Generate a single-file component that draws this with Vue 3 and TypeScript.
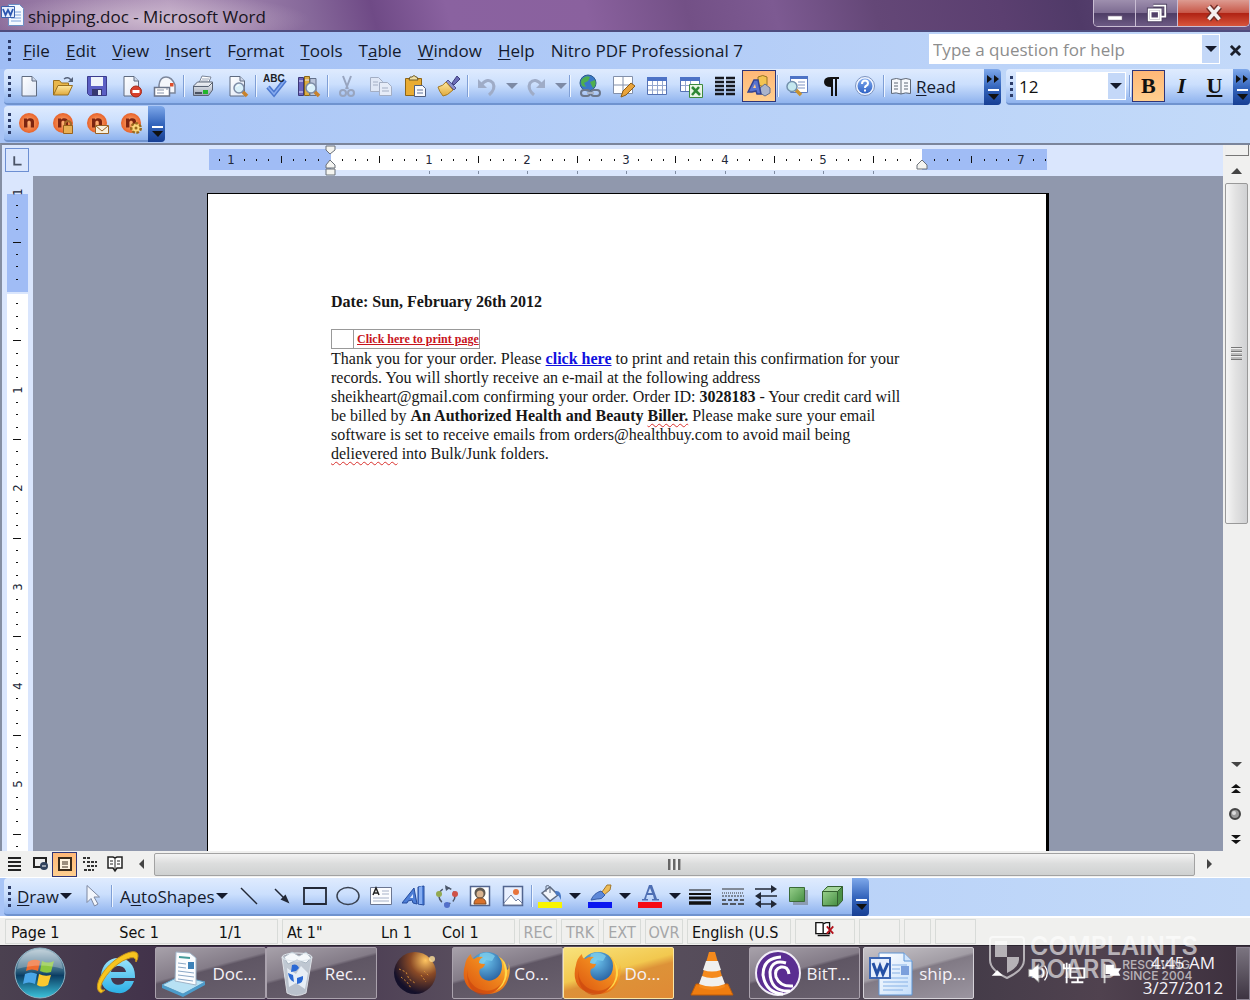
<script setup lang="ts">
import { ref } from 'vue'

interface ToolItem {
  kind: 'button' | 'separator' | 'arrow'
  icon?: string
  label?: string
  pressed?: boolean
  dim?: boolean
}

interface MenuEntry {
  before: string
  key: string
  after: string
}

interface TaskItem {
  icon: string
  text: string
  label: string
  state: 'pinned' | 'open' | 'alert' | 'active'
}

interface Tick {
  pos: number
  kind: 'dot' | 'half' | 'number'
  text: string
}

const btn = (icon: string, label: string, extra: Partial<ToolItem> = {}): ToolItem => ({
  kind: 'button',
  icon,
  label,
  ...extra,
})
const sep = (): ToolItem => ({ kind: 'separator' })
const drop = (label: string, dim = false): ToolItem => ({ kind: 'arrow', label, dim })

const page = '<path d="M5 2.500h10l4.500 4.500v15h-14.500z" fill="url(#g-paper)" stroke="#5f6b80"/><path d="M15 2.500v4.500h4.500" fill="#cfd8ea" stroke="#5f6b80"/>'
const lens = '<path d="M17 17l5 5" stroke="#c9822b" stroke-width="3.500"/><circle cx="14" cy="14" r="5" fill="#d9f0fa" stroke="#7d8ba5" stroke-width="1.500"/><path d="M11.500 13a3 3 0 0 1 3-2" stroke="#fff" fill="none"/>'
const nitro = '<circle cx="12" cy="12" r="10" fill="url(#g-nitro)"/><path d="M7 16.500v-9h3v1.300c2-2.300 7-2 7 1.700v6h-3.200v-5.300c0-2-3.400-2-3.400 0v5.300z" fill="#7c2410"/>'
const firefox = '<circle cx="25" cy="21" r="18" fill="url(#g-globe)"/><path d="M18 5q8-4 15 2l-3 5-6-1-3 5-5-2z" fill="#7fd0ee" opacity=".75"/><path d="M3 16Q4 9 9 5q0 4 3 5 4-3 9-2-4 2-4 6 2 1 6 1-1 4-5 5-2 5 2 9 6 5 13 1 7-4 7-13 0-6-4-10 8 4 9 14 3-2 1-8 3 6 1 14-4 17-20 18Q5 45 2 29 1 22 3 16z" fill="url(#g-fox)"/><path d="M5 20q0 14 12 20 13 5 22-5-7 12-20 11Q4 42 5 20z" fill="#c63f0c" opacity=".55"/><path d="M39 9q7 7 6 17-2 11-11 16 9-8 9-18 0-8-4-15z" fill="#ffd84a"/>'

const icons: Record<string, string> = {
  fresh: page,
  open: '<path d="M2.500 21V6.500h6l2 2.500h7v4" fill="#e9b74a" stroke="#9a701f"/><path d="M2.500 21l4.500-9.500h14.500L17 21z" fill="url(#g-folder)" stroke="#9a701f"/><path d="M13 5q4-3 7 1" fill="none" stroke="#56627a" stroke-width="1.500"/><path d="M22 3v5h-5z" fill="#56627a"/>',
  save: '<path d="M2.500 2.500h19v19h-17l-2-2z" fill="#5b5fc4" stroke="#3b3c8d"/><path d="M6 3h12v9H6z" fill="#eef3fb"/><path d="M7 15h10v6.500H7z" fill="#35386f"/><path d="M13 16h3v5h-3z" fill="#dfe5f4"/>',
  permission: page + '<circle cx="17" cy="17.500" r="5.500" fill="#d8402b" stroke="#a52a18"/><path d="M13.500 16h7v3h-7z" fill="#fff"/>',
  mail: '<path d="M6 11q1-8 7-8t9 8v8H6z" fill="#f4f6fb" stroke="#7c869b" stroke-width="1.500"/><path d="M17 9h3.500v3.500H17z" fill="#dd4e2b"/><path d="M1.500 13.500h15V22h-15z" fill="#fff" stroke="#6c768b" stroke-width="1.500"/><path d="M4 16h7M4 19h7M13 15h2" stroke="#8793ab"/>',
  print: '<path d="M8 9l3-7 9 1-3 7z" fill="#fff" stroke="#7a8598"/><path d="M10 7h7M11 5h7" stroke="#9aa5b8"/><path d="M2.500 12l4-4h15v8l-4 5.500h-15z" fill="url(#g-silver)" stroke="#596273"/><path d="M3 12.500h14.500l4-4" fill="none" stroke="#596273"/><path d="M12 16h5v4h-5z" fill="#21b52b"/><path d="M4 19h7" stroke="#4b5362" stroke-width="2"/>',
  preview: page + lens,
  spell: '<path d="M5 13l6 7L22 6" fill="none" stroke="#4c78cf" stroke-width="4.500"/><path d="M5 13l6 7L22 6" fill="none" stroke="#86abef" stroke-width="1.500"/><text x="0" y="8" font-family="Liberation Sans, sans-serif" font-size="10" font-weight="700" fill="#1c1f28">ABC</text>',
  research: '<path d="M1.500 3.500h5v18h-5z" fill="#6a64bc" stroke="#3c3878"/><path d="M7.500 2.500h5v19h-5z" fill="#dcae43" stroke="#8a6618"/><path d="M13 4.500h6v17h-6z" fill="#b9c4da" stroke="#63708a"/><path d="M2 7h4M2 18h4M8 6h4" stroke="#e9e4ff"/>' + lens,
  cut: '<path d="M8 2l5 13M16 2l-5 13" stroke="#98a5bf" stroke-width="2"/><circle cx="8" cy="19" r="3" fill="none" stroke="#98a5bf" stroke-width="2"/><circle cx="16" cy="19" r="3" fill="none" stroke="#98a5bf" stroke-width="2"/>',
  copy: '<path d="M1.500 3.500h8l4 4v10h-12z" fill="#dfe7f6" stroke="#a3aec4"/><path d="M10.500 8.500h8l4 4v9h-12z" fill="#e6ecf8" stroke="#a3aec4"/><path d="M4 8h5M4 11h5M13 14h6M13 17h7" stroke="#a3aec4"/>',
  paste: '<path d="M2.500 4.500h16v17h-16z" fill="#e9ac34" stroke="#8d6517"/><path d="M6 6l1-3h2q2-3 4 0h1l1 3z" fill="#f0dfa3" stroke="#6d5a2a"/><path d="M11.500 11.500h8l3 3v8h-11z" fill="#f7f9fe" stroke="#4f5f80"/><path d="M14 16h6M14 19h6" stroke="#64779e"/>',
  brush: '<path d="M15 9l5-7 3 3-6 6z" fill="#6a6bb6" stroke="#3f4080"/><path d="M11 6l8 8-2 2-8-8z" fill="#8c8fc9" stroke="#51549a"/><path d="M9 8l7 8q-6 6-10 6-4-5-5-9 5-1 8-5z" fill="url(#g-folder)" stroke="#a67a23"/>',
  undo: '<path d="M6 11q7-8 12-2 3 6-4 12" fill="none" stroke="#9facc7" stroke-width="3"/><path d="M3 5v9h9z" fill="#9facc7"/>',
  redo: '<path d="M18 11q-7-8-12-2-3 6 4 12" fill="none" stroke="#9facc7" stroke-width="3"/><path d="M21 5v9h-9z" fill="#9facc7"/>',
  link: '<circle cx="11" cy="9" r="8" fill="#3a78c7" stroke="#2c5a8c"/><path d="M5 5q4-4 8-2l-2 4-4 2 2 4-4-1q-2-4 0-7zM13 8l5-2q2 5-2 8z" fill="#4faf4e"/><rect x="4" y="16" width="9" height="6" rx="3" fill="none" stroke="#6c778b" stroke-width="2"/><rect x="14" y="16" width="9" height="6" rx="3" fill="none" stroke="#6c778b" stroke-width="2"/><path d="M10 19h7" stroke="#a8b2c4" stroke-width="2"/>',
  borders: '<path d="M2.500 2.500h19v17h-19z" fill="#fff" stroke="#8290ab"/><path d="M12 2.500v17M2.500 11h19" stroke="#8290ab"/><path d="M10 23l2-6 8-8 4 3-9 9z" fill="#e9a43c" stroke="#8d5d16"/>',
  table: '<path d="M2.500 3.500h19v17h-19z" fill="#fff" stroke="#5572b3"/><path d="M2 3h20v4H2z" fill="#4d73c6"/><path d="M7.500 7v13M12.500 7v13M17.500 7v13M3 11.500h18M3 16h18" stroke="#93a6cd"/>',
  excel: '<path d="M1.500 3.500h19v14h-19z" fill="#fff" stroke="#5572b3"/><path d="M1 3h20v4H1z" fill="#4d73c6"/><path d="M6.500 7v10M11.500 7v10M2 11.500h18" stroke="#93a6cd"/><path d="M10.500 10.500h13v13h-13z" fill="#e9f5e4" stroke="#3e8a3d"/><path d="M13 13l8 8M20 13l-7 8" stroke="#2e8735" stroke-width="2.500"/>',
  columns: '<path d="M2 4h9M2 8h9M2 12h9M2 16h9M2 20h9M13 4h9M13 8h9M13 12h9M13 16h9M13 20h9" stroke="#15181f" stroke-width="2.500"/>',
  drawing: '<path d="M11 3q5-3 9 0v8q-4 3-9 0z" fill="#f3c451" stroke="#9a7424"/><path d="M13 14l5-4 5 4v5l-5 3-5-3z" fill="#aab4cc" stroke="#636e8c"/><path d="M1 18L7 6h4l3 14h-4l-1-3-4 1z" fill="#5973cf" stroke="#34438f" stroke-width="1.500"/><path d="M6 14h3l-1-4z" fill="#ffc98a"/>',
  docmap: '<path d="M5.500 2.500h17v16h-17z" fill="#fff" stroke="#5d7cc0"/><path d="M5 2h18v3H5z" fill="#4d73c6"/><path d="M13 8h7M13 11h7M13 14h7" stroke="#7f94c4"/><path d="M10 15l6 6" stroke="#c9922f" stroke-width="3.500"/><circle cx="7" cy="12.500" r="5" fill="#c4e8ef" stroke="#7391ac" stroke-width="1.500"/>',
  pilcrow: '<path d="M20 3v2h-2v17h-2V5h-2v17h-2V13q-7 0-7-5t7-5z" fill="#111"/>',
  help: '<circle cx="12" cy="12" r="9.500" fill="#eef4ff" stroke="#7c93bf"/><circle cx="12" cy="12" r="7.500" fill="url(#g-help)"/><path d="M9 10q0-3.500 3-3.500t3 3q0 1.500-2 2.500-1 .5-1 2" fill="none" stroke="#fff" stroke-width="2"/><path d="M11 15.500h2v2h-2z" fill="#fff"/>',
  read: '<path d="M2.500 5.500q5-2 9.500 0 5-2 9.500 0v14q-5-1.500-9.500.5-5-2-9.500-.5z" fill="#f6f8fc" stroke="#5e6877"/><path d="M12 5v15M5 9h4M5 12h4M5 15h4M15 9h4M15 12h4M15 15h4" stroke="#5e6877"/>',
  nitro,
  nitroLock: nitro + '<path d="M14 15v-3q3-4 6 0v3" fill="none" stroke="#a3692a" stroke-width="2"/><path d="M12.500 14.500h9v8h-9z" fill="#e8af55" stroke="#9a631d"/>',
  nitroMail: nitro + '<path d="M10.500 14.500h13v8h-13z" fill="#f8f0dd" stroke="#9a6426"/><path d="M11 15l6 5 6-5" fill="none" stroke="#9a6426"/>',
  nitroGear: nitro + '<circle cx="17" cy="17" r="4.500" fill="#fbd77c" stroke="#9a6a1d" stroke-width="3" stroke-dasharray="2.500 1.500"/><circle cx="17" cy="17" r="3.500" fill="#fbd77c"/><circle cx="17" cy="17" r="1.500" fill="#9a6a1d"/>',
  pointer: '<path d="M6 1.500v17l4-4 3.500 7.500 3.500-2-4-7h5.500z" fill="#f3f6fc" stroke="#7c87a0"/>',
  line: '<path d="M4 4l16 16" stroke="#222836" stroke-width="1.500"/>',
  arrow: '<path d="M5 5l10 10" stroke="#222836" stroke-width="1.500"/><path d="M19.500 19.500l-9-4 5-5z" fill="#222836"/>',
  rect: '<path d="M1 4h22v16H1z" fill="none" stroke="#222836" stroke-width="1.800"/>',
  oval: '<ellipse cx="12" cy="12" rx="11" ry="8.500" fill="none" stroke="#39414f" stroke-width="1.500"/>',
  textbox: '<path d="M1.500 3.500h21v17h-21z" fill="#fbfcff" stroke="#6b7691"/><path d="M13 7h7M13 10h7M4 14h16M4 17h16" stroke="#a6b1c8"/><path d="M4 11l3-7 3 7M5 9h4" fill="none" stroke="#222" stroke-width="1.500"/>',
  wordart: '<path d="M0 19L12 4l3 16-4-1-1-3-4 1-1 2z" fill="#4d7ed6" stroke="#244b9d"/><path d="M16 3l6-1v19l-6-1z" fill="#4d7ed6" stroke="#244b9d"/><path d="M17 3l3-1v18h-3z" fill="#86aef2"/><path d="M8 14l3-4v4z" fill="#dbe8ff"/>',
  diagram: '<circle cx="12" cy="12" r="8" fill="none" stroke="#4b5669" stroke-width="1.500" stroke-dasharray="6 3"/><circle cx="4" cy="10" r="3" fill="#93a951"/><circle cx="20" cy="10" r="3" fill="#cf5248"/><circle cx="12" cy="21" r="3" fill="#526fc9"/><path d="M10 1l5 3-4 3z" fill="#4b5669"/>',
  clipart: '<path d="M2.500 2.500h19v19h-19z" fill="#fff" stroke="#52658f" stroke-width="1.500"/><circle cx="12" cy="9" r="5.500" fill="#605850"/><circle cx="12" cy="10" r="3.500" fill="#d9b491"/><path d="M6 20q0-6 6-6t6 6z" fill="#d9722c" stroke="#7d4a24"/>',
  picture: '<path d="M2.500 2.500h19v19h-19z" fill="#e9f0ff" stroke="#52658f" stroke-width="1.500"/><circle cx="15" cy="8" r="3" fill="#e7743d"/><path d="M3 19l7-8 5 6 2-2 4 4v2H3z" fill="#fff" stroke="#6f7ea0"/>',
  fill: '<path d="M4 9l8-6 8 8-8 6z" fill="#f2f5fa" stroke="#5e6a80" stroke-width="1.500"/><path d="M8 8V2q3-2 4 2v5" fill="none" stroke="#5e6a80"/><path d="M17 7q7-1 6 9-3-6-5-5z" fill="#4c7bc6"/><path d="M0 18h24v6H0z" fill="#f8f400"/>',
  stroke: '<path d="M14 8l5-7h4l-1 5-6 5z" fill="#edbc58" stroke="#a2782c"/><path d="M3 16q3-7 10-9l4 4q-3 5-8 4z" fill="#5d88d8" stroke="#375da8"/><path d="M0 18h24v6H0z" fill="#0a17f0"/>',
  fontcolor: '<path d="M4 16.500v-1.500h2L11 1h3l5 14h2v1.500h-7V15h2l-1-4H9l-1 4h2v1.500zM10 9h4l-2-5z" fill="#4e6fb4" fill-rule="evenodd"/><path d="M0 18h24v6H0z" fill="#f50a14"/>',
  weight: '<path d="M1 6h22" stroke="#111"/><path d="M1 10h22" stroke="#111" stroke-width="2"/><path d="M1 14h22" stroke="#111" stroke-width="3"/><path d="M1 19h22" stroke="#111" stroke-width="3.500"/>',
  dash: '<path d="M1 5h22" stroke="#333"/><path d="M1 9h22" stroke="#333" stroke-dasharray="1 1"/><path d="M1 12h22" stroke="#333" stroke-dasharray="2 1"/><path d="M1 16h22" stroke="#333" stroke-width="1.500" stroke-dasharray="4 2"/><path d="M1 20h22" stroke="#333" stroke-width="1.500" stroke-dasharray="6 2"/>',
  arrows: '<path d="M1 5h18M5 12h18M5 20h14" stroke="#222836" stroke-width="1.500"/><path d="M17 1l6 4-6 4zM7 8l-6 4 6 4zM7 16l-6 4 6 4zM17 16l6 4-6 4z" fill="#222836"/>',
  shadow: '<path d="M6 6h15v15H6z" fill="#7c8797" opacity=".7"/><path d="M2.500 3.500h15v14h-15z" fill="url(#g-green)" stroke="#3a6b37"/>',
  cube: '<path d="M2.500 7.500l5-5h15v14l-5 5.500h-15z" fill="#4c9148" stroke="#33602f"/><path d="M2.500 7.500h15v14h-15z" fill="url(#g-green)" stroke="#33602f"/><path d="M3 7l5-4h14l-4 4z" fill="#a4d59a"/><path d="M17.500 7.500l5-5" stroke="#33602f"/>',
  vNormal: '<path d="M5 6h13M5 10h13M5 14h13M5 18h13" stroke="#222" stroke-width="2"/>',
  vWeb: '<path d="M6 6h12v9H6z" fill="#eee" stroke="#222" stroke-width="2"/><circle cx="16" cy="14" r="4" fill="#31435e"/><path d="M14 14h4" stroke="#fff"/>',
  vPrint: '<path d="M6 6h12v12H6z" fill="#fff3df" stroke="#3a2a1a" stroke-width="2"/><path d="M9 10h6M9 12h6M9 15h6" stroke="#3a2a1a"/>',
  vOutline: '<path d="M5 6h8M9 10h10M9 14h10M6 18h10M5 10h2" stroke="#333" stroke-width="2" stroke-dasharray="3 1"/>',
  vRead: '<path d="M5 5h5l2 1 2-1h5v11h-5l-2 3-2-3H5z" fill="#fff" stroke="#222" stroke-width="1.500"/><path d="M12 6v12M7 9h3M14 9h3M7 12h3M14 12h3" stroke="#222"/>',
  proof: '<path d="M2 4h7l2 1 2-1h4v12H2z" fill="#fff" stroke="#111" stroke-width="1.500"/><path d="M10 5v11M4 18h13" stroke="#111" stroke-width="1.500"/><path d="M14 8l7 8M21 8l-7 8" stroke="#b3121b" stroke-width="2"/>',
  word: '<path d="M8.500 1.500h11l4 4v17h-15z" fill="#f5f9ff" stroke="#6c8fc4"/><path d="M13 9h8M13 12h8M11 15h10M11 18h10" stroke="#7ea3dc"/><path d="M1.500 3.500h13v11h-13z" fill="#e4edfc" stroke="#3d62ad"/><path d="M3 6l2.500 6L8 7l2.500 5L13 6" fill="none" stroke="#2b56b0" stroke-width="1.800"/>',
  caret: '<path d="M0 3h12L6 9z" fill="currentColor"/>',
}

const bigIcons: Record<string, string> = {
  ie: '<path d="M24 9c10 0 17 7 17 18v2H17c1 8 11 9 14 3h9c-3 9-10 13-17 12C11 43 6 36 7 26 8 16 15 9 24 9zm-7 14h15c-1-8-14-8-15 0z" fill="url(#g-ie)" fill-rule="evenodd"/><path d="M7 44C-2 40 7 22 20 12 31 3 44-1 44 7q0 3-2 6 0-7-9-3C21 14 8 30 7 37q-1 5 4 4z" fill="#f7c51f" stroke="#c8941a"/>',
  documents: '<path d="M2 36l18-9 25 6-22 12z" fill="#b8e1f4" stroke="#5b9dc4"/><path d="M2 36v3l21 9v-3zM45 33v3L23 48v-3z" fill="#4c9ccb"/><path d="M16 3l14 1 6 5v27l-21-4z" fill="#fbfdff" stroke="#9fb4c8"/><path d="M19 8l11 1" stroke="#459c9a" stroke-width="2"/><path d="M18 14l8 1M18 18l8 1M18 22l16 2M18 26l16 2M18 30l15 2" stroke="#89a7c6"/><path d="M28 13h6v7h-6z" fill="#3d82b8"/>',
  recycle: '<path d="M9 8l5 36q9 5 19 0l6-36z" fill="#c9d4de" opacity=".85" stroke="#eef3f7"/><path d="M11 8l8-5 7 4 7-4 5 6-5 5-9-3-9 4z" fill="#f5f8fb" stroke="#a9b6c2"/><path d="M14 19l9 6 5-8 7 7-3 16-9-6-7 4z" fill="#e7eef5"/><path d="M19 16q5-2 7 3l-3 3-5 1zM15 24l5 2 1 7q-5-2-6-9zM24 29l6-2q1 7-6 8z" fill="#2a69d4"/><ellipse cx="24" cy="8" rx="15" ry="4" fill="none" stroke="#dfe7ee"/>',
  eclipse: '<circle cx="24" cy="24" r="21" fill="url(#g-eclipse)"/><path d="M8 20l7 3 3 7 6 4M10 28l6 5 4 6M30 26l5 7M33 22l5 5" stroke="#d18a35" stroke-dasharray="2 2" fill="none"/><circle cx="41" cy="10" r="3" fill="#ffe19a" opacity=".8"/>',
  firefox,
  vlc: '<path d="M8 35h32l5 11H3z" fill="#ef7d10" stroke="#c05d08"/><path d="M21 3h6l10 35q-13 6-26 0z" fill="#f58a1c"/><path d="M18 12h12l3 9q-9 3-18 0zM14 27q10 4 20 0l3 8q-13 5-26 0z" fill="#f0f0ee"/>',
  bittorrent: '<circle cx="24" cy="24" r="22" fill="#5a2d91" stroke="#f2edf8" stroke-width="2"/><g fill="none" stroke="#fff" stroke-width="3"><path d="M35 25q-1-8-8-7-7 2-5 10 4 10 17 9"/><path d="M32 14q-14-4-16 9 0 20 20 19"/><path d="M27 8Q9 9 9 26q3 18 20 19"/></g>',
  wordBig: '<path d="M12 4h25l8 8v34H12z" fill="url(#g-sheet)" stroke="#5f95d4"/><path d="M37 4v8h8" fill="#cfe3fb" stroke="#5f95d4"/><path d="M25 16h15M25 20h8M25 24h8M16 29h25M16 33h25M16 37h25M16 41h20" stroke="#86b1e6"/><path d="M34 17h8v9h-8z" fill="#7b9fdc"/><path d="M3 9h20v20H3z" fill="#e6effc" stroke="#3c66b3" stroke-width="2"/><path d="M6 14l4 11 3-8 3 8 5-11" fill="none" stroke="#2450a5" stroke-width="3"/>',
}

const menus: MenuEntry[] = [
  { before: '', key: 'F', after: 'ile' },
  { before: '', key: 'E', after: 'dit' },
  { before: '', key: 'V', after: 'iew' },
  { before: '', key: 'I', after: 'nsert' },
  { before: 'F', key: 'o', after: 'rmat' },
  { before: '', key: 'T', after: 'ools' },
  { before: 'T', key: 'a', after: 'ble' },
  { before: '', key: 'W', after: 'indow' },
  { before: '', key: 'H', after: 'elp' },
  { before: 'Nitro PDF Professional 7', key: '', after: '' },
]

const standard: ToolItem[] = [
  btn('fresh', 'New'), btn('open', 'Open'), btn('save', 'Save'), btn('permission', 'Permission'), btn('mail', 'E-mail'),
  sep(), btn('print', 'Print'), btn('preview', 'Print Preview'),
  sep(), btn('spell', 'Spelling'), btn('research', 'Research'),
  sep(), btn('cut', 'Cut'), btn('copy', 'Copy'), btn('paste', 'Paste'), btn('brush', 'Format Painter'),
  sep(), btn('undo', 'Undo'), drop('Undo list', true), btn('redo', 'Redo'), drop('Redo list', true),
  sep(), btn('link', 'Hyperlink'), btn('borders', 'Tables and Borders'), btn('table', 'Insert Table'),
  btn('excel', 'Insert Worksheet'), btn('columns', 'Columns'), btn('drawing', 'Drawing', { pressed: true }),
  sep(), btn('docmap', 'Document Map'), btn('pilcrow', 'Show marks'), btn('help', 'Help'), sep(),
]

const nitroTools: ToolItem[] = [
  btn('nitro', 'Create PDF'), btn('nitroLock', 'Create secure PDF'), btn('nitroMail', 'E-mail PDF'), btn('nitroGear', 'PDF settings'),
]

const drawTools: ToolItem[] = [
  btn('line', 'Line'), btn('arrow', 'Arrow'), btn('rect', 'Rectangle'), btn('oval', 'Oval'), btn('textbox', 'Text Box'),
  btn('wordart', 'WordArt'), btn('diagram', 'Diagram'), btn('clipart', 'Clip Art'), btn('picture', 'Picture'), sep(),
  btn('fill', 'Fill Color'), drop('Fill colors'), btn('stroke', 'Line Color'), drop('Line colors'),
  btn('fontcolor', 'Font Color'), drop('Font colors'), btn('weight', 'Line Style'), btn('dash', 'Dash Style'),
  btn('arrows', 'Arrow Style'), btn('shadow', 'Shadow'), btn('cube', '3-D Style'),
]

const views: ToolItem[] = [
  btn('vNormal', 'Normal View'), btn('vWeb', 'Web Layout'), btn('vPrint', 'Print Layout', { pressed: true }),
  btn('vOutline', 'Outline'), btn('vRead', 'Reading Layout'),
]

const tasks: TaskItem[] = [
  { icon: 'ie', text: '', label: 'Internet Explorer', state: 'pinned' },
  { icon: 'documents', text: 'Doc...', label: 'Documents', state: 'open' },
  { icon: 'recycle', text: 'Rec...', label: 'Recycle Bin', state: 'open' },
  { icon: 'eclipse', text: '', label: 'Eclipse', state: 'pinned' },
  { icon: 'firefox', text: 'Co...', label: 'Firefox', state: 'open' },
  { icon: 'firefox', text: 'Do...', label: 'Downloads', state: 'alert' },
  { icon: 'vlc', text: '', label: 'VLC', state: 'pinned' },
  { icon: 'bittorrent', text: 'BitT...', label: 'BitTorrent', state: 'open' },
  { icon: 'wordBig', text: 'ship...', label: 'shipping.doc', state: 'active' },
]

// Ruler marks fall on every eighth of an inch, with 592px standing for six inches.
function ticks(origin: number, from: number, to: number): Tick[] {
  const list: Tick[] = []
  for (let i = from; i <= to; i++) {
    const kind = i % 8 === 0 ? 'number' : i % 4 === 0 ? 'half' : 'dot'
    list.push({ pos: Math.round(origin + (i * 592) / 48), kind, text: String(Math.abs(i / 8)) })
  }
  return list
}

const across = ticks(122, -10, 58).filter((t) => t.text !== '0' && t.text !== '6')
const down = ticks(115, -8, 45).filter((t) => t.text !== '0')
const stops = [2, 3, 4, 5, 6, 7, 8, 9, 10, 11].map((i) => Math.round(122 + (i * 592) / 12))

const question = ref('')
const fontSize = ref('12')
</script>

<template>
  <div class="screen">
    <svg class="defs" aria-hidden="true">
      <defs>
        <linearGradient id="g-paper" x1="0" y1="0" x2="1" y2="1"><stop offset="0" stop-color="#fff" /><stop offset="1" stop-color="#dce5f5" /></linearGradient>
        <linearGradient id="g-folder" x1="0" y1="0" x2="0" y2="1"><stop offset="0" stop-color="#ffe9a0" /><stop offset="1" stop-color="#e0a93c" /></linearGradient>
        <linearGradient id="g-silver" x1="0" y1="0" x2="0" y2="1"><stop offset="0" stop-color="#f5f7fa" /><stop offset="1" stop-color="#98a2b3" /></linearGradient>
        <linearGradient id="g-green" x1="0" y1="0" x2="1" y2="1"><stop offset="0" stop-color="#97cf8b" /><stop offset="1" stop-color="#468f43" /></linearGradient>
        <linearGradient id="g-help" x1="0" y1="0" x2="0" y2="1"><stop offset="0" stop-color="#7fa9ee" /><stop offset="1" stop-color="#2f62c4" /></linearGradient>
        <radialGradient id="g-nitro"><stop offset="0" stop-color="#ffb176" /><stop offset="1" stop-color="#e8622a" /></radialGradient>
        <linearGradient id="g-ie" x1="0" y1="0" x2="0" y2="1"><stop offset="0" stop-color="#9be4fb" /><stop offset="1" stop-color="#2bb0e6" /></linearGradient>
        <radialGradient id="g-globe" cx=".45" cy=".25" r=".8"><stop offset="0" stop-color="#6cc4ee" /><stop offset="1" stop-color="#123f86" /></radialGradient>
        <linearGradient id="g-fox" x1="0" y1="1" x2="1" y2="0"><stop offset="0" stop-color="#d94e0e" /><stop offset="0.600" stop-color="#f18a1e" /><stop offset="1" stop-color="#ffd94d" /></linearGradient>
        <radialGradient id="g-eclipse" cx=".75" cy=".2" r=".8"><stop offset="0" stop-color="#ffc561" /><stop offset="0.450" stop-color="#8a4a26" /><stop offset="1" stop-color="#14102a" /></radialGradient>
        <linearGradient id="g-sheet" x1="0" y1="0" x2="1" y2="1"><stop offset="0" stop-color="#fff" /><stop offset="1" stop-color="#c5defa" /></linearGradient>
        <linearGradient id="g-orb" x1="0" y1="0" x2="0" y2="1"><stop offset="0" stop-color="#b6c9d4" /><stop offset="0.450" stop-color="#2f617f" /><stop offset="0.550" stop-color="#0b3d63" /><stop offset="1" stop-color="#3cc4dc" /></linearGradient>
      </defs>
    </svg>

    <header class="title-bar">
      <svg class="title-icon" viewBox="0 0 24 24" v-html="icons.word"></svg>
      <h1>shipping.doc - Microsoft Word</h1>
      <div class="window-buttons">
        <button type="button" aria-label="Minimize"><svg viewBox="0 0 24 24"><path d="M4 15h16v5H4z" fill="#fff" stroke="#564568" /></svg></button>
        <button type="button" aria-label="Restore"><svg viewBox="0 0 24 24"><path d="M8 4h13v12h-4M3 8h13v12H3z" fill="none" stroke="#4d4060" stroke-width="4" /><path d="M8 4h13v12h-4M3 8h13v12H3z" fill="none" stroke="#fff" stroke-width="2" /><path d="M5 10h9v8H5z" fill="none" stroke="#fff" stroke-width="2" /></svg></button>
        <button type="button" class="close" aria-label="Close window"><svg viewBox="0 0 24 24"><path d="M6 5l12 14M18 5L6 19" stroke="#743029" stroke-width="7" /><path d="M6 5l12 14M18 5L6 19" stroke="#f4f0f0" stroke-width="4" /></svg></button>
      </div>
    </header>

    <nav class="menu-bar">
      <span class="grip"></span>
      <button v-for="m in menus" :key="m.before + m.key" type="button" class="menu">{{ m.before }}<u v-if="m.key">{{ m.key }}</u>{{ m.after }}</button>
      <div class="question">
        <input v-model="question" type="text" placeholder="Type a question for help" aria-label="Type a question for help" />
        <button type="button" aria-label="Recent questions"><svg class="caret" viewBox="0 0 12 12" v-html="icons.caret"></svg></button>
      </div>
      <button type="button" class="doc-close" aria-label="Close document"><svg viewBox="0 0 12 12"><path d="M1 1l10 10M11 1L1 11" stroke="#1b1f2b" stroke-width="3" /></svg></button>
    </nav>

    <div class="tool-row">
      <div class="toolbar">
        <span class="grip"></span>
        <template v-for="(t, i) in standard" :key="i">
          <span v-if="t.kind === 'separator'" class="sep"></span>
          <button v-else-if="t.kind === 'arrow'" type="button" class="drop" :class="{ dim: t.dim }" :aria-label="t.label"><svg class="caret" viewBox="0 0 12 12" v-html="icons.caret"></svg></button>
          <button v-else type="button" class="tool" :class="{ pressed: t.pressed }" :aria-label="t.label"><svg viewBox="0 0 24 24" v-html="icons[t.icon!]"></svg></button>
        </template>
        <button type="button" class="read"><svg viewBox="0 0 24 24" v-html="icons.read"></svg><span><u>R</u>ead</span></button>
        <button type="button" class="more" aria-label="More standard buttons"><svg viewBox="0 0 17 36"><path d="M3 6l5 4-5 4zM10 6l5 4-5 4z" fill="#111" /><path d="M4 21h11" stroke="#fff" stroke-width="2" /><path d="M4 25h11l-5 6z" fill="#111" /></svg></button>
      </div>
      <div class="toolbar formatting">
        <span class="grip"></span>
        <div class="combo">
          <select v-model="fontSize" aria-label="Font size"><option>12</option><option>14</option></select>
          <span class="combo-arrow"><svg class="caret" viewBox="0 0 12 12" v-html="icons.caret"></svg></span>
        </div>
        <span class="sep"></span>
        <button type="button" class="tool glyph pressed"><b>B</b></button>
        <button type="button" class="tool glyph"><i>I</i></button>
        <button type="button" class="tool glyph"><u>U</u></button>
        <button type="button" class="more" aria-label="More formatting buttons"><svg viewBox="0 0 17 36"><path d="M3 6l5 4-5 4zM10 6l5 4-5 4z" fill="#111" /><path d="M4 21h11" stroke="#fff" stroke-width="2" /><path d="M4 25h11l-5 6z" fill="#111" /></svg></button>
      </div>
    </div>

    <div class="tool-row">
      <div class="toolbar">
        <span class="grip"></span>
        <button v-for="t in nitroTools" :key="t.icon" type="button" class="tool" :aria-label="t.label"><svg viewBox="0 0 24 24" v-html="icons[t.icon!]"></svg></button>
        <button type="button" class="more" aria-label="More PDF buttons"><svg viewBox="0 0 17 36"><path d="M4 21h11" stroke="#fff" stroke-width="2" /><path d="M4 25h11l-5 6z" fill="#111" /></svg></button>
      </div>
    </div>

    <main class="workspace">
      <div class="corner"><button type="button" aria-label="Tab type"><svg viewBox="0 0 24 24"><path d="M9 8v9h8" fill="none" stroke="#4b5467" stroke-width="2" /></svg></button></div>
      <div class="ruler">
        <svg width="840" height="31" viewBox="0 1 840 31">
          <rect x="1" y="5" width="838" height="21" fill="#a0bcf5" />
          <rect x="123" y="5" width="591" height="21" fill="#fff" />
          <g v-for="t in across" :key="t.pos">
            <text v-if="t.kind === 'number'" :x="t.pos" y="20" class="ruler-text">{{ t.text }}</text>
            <rect v-else-if="t.kind === 'half'" :x="t.pos" y="12" width="1" height="7" fill="#111" />
            <rect v-else :x="t.pos" y="15" width="1" height="2" fill="#111" />
          </g>
          <rect v-for="s in stops" :key="s" :x="s" y="27" width="1" height="3" fill="#7f8ba3" />
          <path d="M118 2h9v4l-5 4-4-4zM118 24v-3l4-5 5 5v3zM118 25h9v6h-9zM709 25v-4l5-5 5 5v4z" fill="#f4f4f0" stroke="#6a7078" />
        </svg>
      </div>
      <div class="side-ruler">
        <svg width="33" height="1100" viewBox="0 0 33 1100">
          <rect x="7" y="18" width="21" height="98" fill="#a0bcf5" />
          <rect x="7" y="118" width="21" height="982" fill="#fff" />
          <g v-for="t in down" :key="t.pos">
            <text v-if="t.kind === 'number'" x="0" y="0" class="ruler-text" :transform="`translate(22 ${t.pos}) rotate(-90)`">{{ t.text }}</text>
            <rect v-else-if="t.kind === 'half'" x="13" :y="t.pos" width="8" height="1" fill="#111" />
            <rect v-else x="16" :y="t.pos" width="2" height="1" fill="#111" />
          </g>
        </svg>
      </div>
      <div class="desk">
        <article class="paper">
          <p><b>Date: Sun, February 26th 2012</b></p>
          <table>
            <tbody>
              <tr>
                <td class="blank"></td>
                <td><a href="#print">Click here to print page</a></td>
              </tr>
            </tbody>
          </table>
          <p>
            Thank you for your order. Please <a href="#confirmation">click here</a> to print and retain this confirmation for your<br />
            records. You will shortly receive an e-mail at the following address<br />
            sheikheart@gmail.com confirming your order. Order ID: <b>3028183</b> - Your credit card will<br />
            be billed by <b>An Authorized Health and Beauty <span class="typo">Biller.</span></b> Please make sure your email<br />
            software is set to receive emails from orders@healthbuy.com to avoid mail being<br />
            <span class="typo">delievered</span> into Bulk/Junk folders.
          </p>
        </article>
      </div>
      <div class="v-scroll">
        <span class="split"></span>
        <button type="button" aria-label="Scroll up"><svg viewBox="0 0 24 24"><path d="M6 15l6-6 5 6z" fill="#444" /></svg></button>
        <div class="v-track"><div class="v-thumb"><span></span></div></div>
        <button type="button" aria-label="Scroll down"><svg viewBox="0 0 24 24"><path d="M6 10h11l-5 5z" fill="#444" /></svg></button>
        <button type="button" aria-label="Previous page"><svg viewBox="0 0 24 24"><path d="M6 11l5-4 5 4zM6 16l5-4 5 4z" fill="#111" /></svg></button>
        <button type="button" aria-label="Select browse object"><svg viewBox="0 0 24 24"><circle cx="10" cy="12" r="5" fill="#999" stroke="#444" stroke-width="2" /><circle cx="9" cy="11" r="2" fill="#ddd" /></svg></button>
        <button type="button" aria-label="Next page"><svg viewBox="0 0 24 24"><path d="M6 8h10l-5 4zM6 13h10l-5 4z" fill="#111" /></svg></button>
      </div>
    </main>

    <div class="view-row">
      <button v-for="v in views" :key="v.icon" type="button" class="view" :class="{ pressed: v.pressed }" :aria-label="v.label"><svg viewBox="0 0 24 24" v-html="icons[v.icon!]"></svg></button>
      <button type="button" class="h-arrow" aria-label="Scroll left"><svg viewBox="0 0 24 24"><path d="M15 7v10l-5-5z" fill="#444" /></svg></button>
      <div class="h-thumb"><span></span></div>
      <button type="button" class="h-arrow" aria-label="Scroll right"><svg viewBox="0 0 24 24"><path d="M10 7v10l5-5z" fill="#444" /></svg></button>
    </div>

    <div class="tool-row draw-row">
      <div class="toolbar">
        <span class="grip"></span>
        <button type="button" class="text-tool"><span><u>D</u>raw</span><svg class="caret" viewBox="0 0 12 12" v-html="icons.caret"></svg></button>
        <button type="button" class="tool" aria-label="Select Objects"><svg viewBox="0 0 24 24" v-html="icons.pointer"></svg></button>
        <span class="sep"></span>
        <button type="button" class="text-tool"><span>A<u>u</u>toShapes</span><svg class="caret" viewBox="0 0 12 12" v-html="icons.caret"></svg></button>
        <template v-for="(t, i) in drawTools" :key="i">
          <span v-if="t.kind === 'separator'" class="sep"></span>
          <button v-else-if="t.kind === 'arrow'" type="button" class="drop" :aria-label="t.label"><svg class="caret" viewBox="0 0 12 12" v-html="icons.caret"></svg></button>
          <button v-else type="button" class="tool" :aria-label="t.label"><svg viewBox="0 0 24 24" v-html="icons[t.icon!]"></svg></button>
        </template>
        <button type="button" class="more" aria-label="More drawing buttons"><svg viewBox="0 0 17 36"><path d="M4 21h11" stroke="#fff" stroke-width="2" /><path d="M4 25h11l-5 6z" fill="#111" /></svg></button>
      </div>
    </div>

    <footer class="status">
      <div class="cell pages"><span>Page 1</span><span>Sec 1</span><span>1/1</span></div>
      <div class="cell place"><span>At 1"</span><span>Ln 1</span><span>Col 1</span></div>
      <div class="cell mode">REC</div>
      <div class="cell mode">TRK</div>
      <div class="cell mode">EXT</div>
      <div class="cell mode">OVR</div>
      <div class="cell lang">English (U.S</div>
      <div class="cell proof"><svg viewBox="0 0 24 24" v-html="icons.proof"></svg></div>
      <div class="cell wide"></div>
      <div class="cell"></div>
      <div class="cell wide"></div>
    </footer>

    <footer class="taskbar">
      <button type="button" class="start" aria-label="Start">
        <svg viewBox="0 0 52 52">
          <circle cx="26" cy="26" r="25" fill="url(#g-orb)" stroke="#8db3c4" />
          <path d="M14 15q6-4 12-1l-2 10q-6-3-12 0z" fill="#ee6b2f" />
          <path d="M28 14q6 3 12 0l-3 11q-5 2-11-1z" fill="#8cc63f" />
          <path d="M11 27q6-3 12 0l-2 10q-6-3-12 0z" fill="#4aa6e8" />
          <path d="M25 27q6 3 12 1l-3 10q-6 3-11 0z" fill="#fbc92f" />
          <path d="M3 22Q6 3 26 3t23 19q-22-7-46 0z" fill="#fff" opacity=".25" />
        </svg>
      </button>
      <button v-for="(t, i) in tasks" :key="i" type="button" class="task" :class="t.state" :aria-label="t.label">
        <svg viewBox="0 0 48 48" v-html="bigIcons[t.icon]"></svg>
        <span v-if="t.text">{{ t.text }}</span>
      </button>
      <div class="tray">
        <button type="button" aria-label="Show hidden icons"><svg viewBox="0 0 28 28"><path d="M4 17l6-6 6 6z" fill="#fff" /></svg></button>
        <button type="button" aria-label="Volume"><svg viewBox="0 0 28 28"><path d="M4 10h4l7-6v20l-7-6H4z" fill="#fff" stroke="#888" /><path d="M18 9q4 5 0 10M21 6q6 8 0 16" fill="none" stroke="#fff" stroke-width="1.500" /></svg></button>
        <button type="button" aria-label="Network"><svg viewBox="0 0 28 28"><path d="M9 9h15v10H9zM17 19v5M10 24h13" fill="none" stroke="#fff" stroke-width="2" /><path d="M5 3v22M2 4v5h6V4" fill="none" stroke="#fff" stroke-width="2" /></svg></button>
        <button type="button" aria-label="Action Center"><svg viewBox="0 0 28 28"><path d="M6 4v21" stroke="#ccc" stroke-width="2" /><path d="M7 5h9v4h8l-3 4 2 4H12v-2H7z" fill="#fff" /></svg></button>
      </div>
      <div class="clock"><span>4:45 AM</span><span>3/27/2012</span></div>
      <button type="button" class="peek" aria-label="Show desktop"></button>
      <div class="watermark">
        <svg viewBox="0 0 36 44"><path d="M4 2h28q3 0 3 3v20q0 10-17 18Q1 35 1 25V5q0-3 3-3z" fill="none" stroke="#fff" stroke-width="2" /><path d="M6 6h12v16H6zM18 22h12v3q0 7-12 13z" fill="#fff" /></svg>
        <div>
          <strong>COMPLAINTS</strong>
          <div class="mark-row"><strong>BOARD</strong><small>RESOLVING<br />SINCE 2004</small></div>
        </div>
      </div>
    </footer>
  </div>
</template>

<style>
body {
  margin: 0;
}
</style>

<style scoped>
.screen {
  display: flex;
  flex-direction: column;
  height: 100vh;
  min-height: 600px;
  overflow: hidden;
  background: #b5cff8;
  color: #141a2c;
  font-family: "Open Sans", "Noto Sans", sans-serif;
  font-size: 17px;
}
.defs {
  position: absolute;
  width: 0;
  height: 0;
}
button {
  display: flex;
  align-items: center;
  justify-content: center;
  flex: none;
  margin: 0;
  padding: 0;
  border: 0;
  background: none;
  color: inherit;
  font: inherit;
}
svg {
  display: block;
  flex: none;
}
u {
  text-underline-offset: 2px;
}
.caret {
  width: 12px;
  height: 12px;
}

.title-bar {
  display: flex;
  align-items: center;
  flex: none;
  height: 30px;
  border-bottom: 2px solid #4f4c7e;
  background:
    radial-gradient(ellipse 160px 26px at 12% 65%, rgba(225, 210, 222, 0.6), transparent),
    linear-gradient(75deg, #8b6c9b 0%, #b196ba 14%, #86689a 25%, #6f4a86 30%, #8a62a0 36%, #8a619e 47%, #735086 55%, #7d5a92 62%, #644777 70%, #5b3f70 80%, #503a68 86%, #6b5685 100%);
}
.title-icon {
  width: 24px;
  height: 24px;
}
h1 {
  flex: 1;
  margin: 0 0 0 4px;
  padding-top: 4px;
  color: #171320;
  font-size: 17px;
  font-weight: 400;
  line-height: 24px;
}
.window-buttons {
  display: flex;
  align-self: flex-start;
  height: 26px;
  border: 1px solid #c9bdd3;
  border-top: 0;
  border-radius: 0 0 5px 5px;
  overflow: hidden;
}
.window-buttons button {
  width: 42px;
  border-right: 1px solid #c9bdd3;
  background: linear-gradient(#9e8fae, #7c6b91 50%, #4e3d66 52%, #6c5a84);
}
.window-buttons button.close {
  width: 71px;
  border-right: 0;
  background: linear-gradient(#dd9b91, #c8594a 48%, #b02314 52%, #d8553c);
}
.window-buttons svg {
  width: 22px;
  height: 22px;
}

.menu-bar {
  display: flex;
  align-items: center;
  flex: none;
  height: 37px;
  padding-left: 8px;
  background: linear-gradient(90deg, #9fbdf5, #c3d9f9);
}
.grip {
  flex: none;
  width: 3px;
  height: 21px;
  background: repeating-linear-gradient(#2c3c69 0 3px, transparent 3px 6px);
}
.menu {
  padding: 0 8px;
  white-space: nowrap;
}
.grip + .menu {
  margin-left: 4px;
}
.question {
  display: flex;
  width: 289px;
  height: 28px;
  margin-left: auto;
  margin-bottom: 3px;
  border: 1px solid #fff;
  background: #fff;
}
.question input {
  flex: 1;
  min-width: 0;
  padding: 0 3px;
  border: 0;
  outline: 0;
  background: none;
  font: inherit;
}
.question input::placeholder {
  color: #8d8d8d;
  opacity: 1;
}
.question button {
  width: 17px;
  background: #c4d8f8;
}
.doc-close {
  width: 30px;
}
.doc-close svg {
  width: 11px;
  height: 11px;
}

.tool-row {
  display: flex;
  flex: none;
  gap: 5px;
  height: 37px;
  padding-left: 4px;
  background: linear-gradient(90deg, #a8c4f6, #c3daf9);
}
.toolbar {
  display: flex;
  align-items: center;
  height: 34px;
  padding-left: 4px;
  border-bottom: 2px solid #6f93cf;
  border-radius: 4px;
  background: linear-gradient(#dfebfe, #cbdffd 45%, #8fb3ee);
}
.toolbar > .grip + .tool {
  margin-left: 1px;
}
.tool {
  box-sizing: border-box;
  width: 34px;
  height: 32px;
}
.tool svg,
.read svg {
  width: 24px;
  height: 24px;
}
.pressed {
  border: 1px solid #2f3577;
  background: linear-gradient(#ffb877, #ffcf8f);
}
.sep {
  flex: none;
  width: 1px;
  height: 22px;
  margin: 0 1px;
  border-right: 1px solid #eef5ff;
  background: #7f9fd6;
}
.drop {
  width: 15px;
  height: 32px;
}
.dim {
  color: #7d8aa5;
}
.read {
  gap: 3px;
  padding: 0 28px 0 3px;
}
.more {
  align-self: stretch;
  width: 17px;
  margin-bottom: -2px;
  border-radius: 0 4px 4px 0;
  background: linear-gradient(#7ea8ea, #3566bd 50%, #173f94);
}
.more svg {
  width: 17px;
  height: 36px;
}
.formatting {
  flex: 1;
}
.formatting .more {
  margin-left: auto;
}
.combo {
  display: grid;
  flex: none;
  width: 110px;
  height: 28px;
  margin: 0 2px 0 3px;
  background: #fff;
}
.combo select {
  grid-area: 1 / 1;
  width: 100%;
  padding: 0 2px;
  border: 1px solid #fff;
  border-radius: 0;
  appearance: none;
  background: #fff;
  color: #111;
  font: inherit;
}
.combo-arrow {
  display: flex;
  grid-area: 1 / 1;
  align-items: center;
  justify-content: center;
  justify-self: end;
  width: 17px;
  margin: 1px;
  background: #c4d8f8;
  pointer-events: none;
}
.glyph {
  width: 33px;
  color: #111;
  font-family: "Liberation Serif", serif;
  font-size: 22px;
  font-weight: 700;
}

.workspace {
  display: grid;
  grid-template-columns: 31px minmax(0, 1fr) 27px;
  grid-template-rows: 31px minmax(0, 1fr);
  flex: 1;
  min-height: 0;
  border-top: 2px solid #7b859b;
  border-left: 2px solid #858fa3;
  background: #dae6fd;
}
.corner {
  padding: 3px;
}
.corner button {
  width: 24px;
  height: 24px;
  border: 1px solid #6d8fd2;
}
.corner svg {
  width: 22px;
  height: 22px;
}
.ruler {
  display: flex;
  justify-content: center;
  overflow: hidden;
}
.ruler-text {
  fill: #222838;
  font-family: "DejaVu Sans Condensed", "Noto Sans", sans-serif;
  font-size: 13px;
  text-anchor: middle;
}
.side-ruler {
  grid-row: 2;
  grid-column: 1;
  overflow: hidden;
}
.side-ruler svg {
  margin-left: -2px;
}
.desk {
  grid-row: 2;
  grid-column: 2;
  padding: 17px 12px 0;
  overflow: hidden;
  background: #9098ad;
}
.paper {
  box-sizing: border-box;
  max-width: 842px;
  min-height: 1088px;
  margin: 0 auto;
  padding: 98px 60px 98px 123px;
  border: 1px solid #000;
  border-right-width: 3px;
  background: #fff;
  color: #161616;
  font-family: "Liberation Serif", serif;
  font-size: 16px;
  line-height: 19px;
}
.paper p {
  margin: 0;
}
.paper p a {
  color: #1010e0;
  font-weight: 700;
}
.paper table {
  margin-top: 18px;
  border-collapse: collapse;
}
.paper td {
  height: 18px;
  padding: 0 0 0 3px;
  border: 1px solid #999;
  font-size: 12px;
  font-weight: 700;
  line-height: 18px;
}
.paper td.blank {
  width: 18px;
}
.paper td a {
  color: #c8141c;
}
.typo {
  text-decoration: underline wavy #d9302c 1px;
  text-underline-offset: 2px;
}
.v-scroll {
  display: flex;
  flex-direction: column;
  grid-row: 1 / 3;
  grid-column: 3;
  align-items: center;
  background: #f0f0ef;
}
.v-scroll button {
  width: 27px;
  height: 25px;
}
.v-scroll button svg {
  width: 24px;
  height: 24px;
}
.split {
  flex: none;
  width: 22px;
  height: 10px;
  margin-bottom: 2px;
  border: 1px solid #777;
  border-top: 0;
  border-left-color: #eee;
}
.v-track {
  flex: 1;
  width: 23px;
}
.v-thumb {
  display: flex;
  align-items: center;
  justify-content: center;
  box-sizing: border-box;
  height: 60%;
  border: 1px solid #999;
  border-radius: 2px;
  background: linear-gradient(90deg, #f5f5f5, #e2e2e2 45%, #d0d1d3);
}
.v-thumb span {
  width: 11px;
  height: 13px;
  background: repeating-linear-gradient(#777 0 1px, #eee 1px 2px, #bbb 2px 4px);
}

.view-row {
  display: flex;
  align-items: center;
  flex: none;
  height: 26px;
  padding-left: 2px;
  padding-right: 28px;
  background: #f0f0ef;
}
.view {
  box-sizing: border-box;
  width: 25px;
  height: 25px;
}
.view svg {
  width: 24px;
  height: 24px;
}
.h-arrow {
  width: 27px;
}
.h-arrow svg {
  width: 24px;
  height: 24px;
}
.h-thumb {
  display: flex;
  align-items: center;
  justify-content: center;
  flex: 1;
  height: 21px;
  border: 1px solid #a2a2a2;
  border-radius: 2px;
  background: linear-gradient(#f3f3f3, #dcdddd 45%, #cfd1d1);
}
.h-thumb span {
  width: 13px;
  height: 11px;
  background: repeating-linear-gradient(90deg, #666 0 2px, #aaa 2px 3px, #eee 3px 5px);
}

.draw-row {
  height: 38px;
  border-top: 1px solid #fff;
}
.draw-row .toolbar {
  height: 36px;
}
.draw-row .tool {
  width: 33px;
}
.draw-row .drop {
  width: 17px;
}
.draw-row .more {
  margin-left: 3px;
}
.text-tool {
  gap: 1px;
  padding: 0 5px 0 6px;
}

.status {
  display: flex;
  align-items: stretch;
  flex: none;
  gap: 4px;
  height: 25px;
  padding: 1px 0 1px 5px;
  border-top: 2px solid #fff;
  background: #f0f0ee;
  color: #111;
  font-family: "DejaVu Sans Condensed", "Noto Sans", sans-serif;
  font-size: 16px;
}
.cell {
  display: flex;
  align-items: center;
  box-sizing: border-box;
  flex: none;
  width: 27px;
  padding: 2px 4px 0;
  border: 1px solid #d8dbd8;
  white-space: nowrap;
}
.pages {
  justify-content: space-between;
  width: 273px;
  padding: 2px 35px 0 5px;
}
.place {
  width: 233px;
}
.place span:first-child {
  width: 94px;
}
.place span:nth-child(2) {
  width: 61px;
}
.mode {
  justify-content: center;
  width: 38px;
  padding: 2px 0 0;
  color: #a5a6a8;
}
.lang {
  width: 104px;
}
.proof {
  justify-content: center;
  width: 60px;
  padding: 0 0 4px;
}
.proof svg {
  width: 22px;
  height: 22px;
}
.wide {
  width: 41px;
}

.taskbar {
  position: relative;
  display: flex;
  align-items: center;
  flex: none;
  height: 54px;
  border-top: 1px solid #2b2530;
  background: linear-gradient(90deg, #4b4150, #3e2c48 18%, #5d5361 40%, #534a58 62%, #453c49 78%, #50424f 88%, #3c2f3d);
  color: #f5f2f7;
}
.start {
  width: 80px;
}
.start svg {
  width: 52px;
  height: 52px;
}
.task {
  box-sizing: border-box;
  gap: 4px;
  width: 111px;
  height: 52px;
  padding-right: 4px;
  border: 1px solid #aaa2ad;
  border-radius: 2px;
  background: linear-gradient(165deg, #a7a1aa 0%, #847c88 42%, #5f5664 46%, #6a616e);
}
.task svg {
  width: 48px;
  height: 48px;
}
.task.pinned {
  width: 75px;
  padding: 0;
  border: 0;
  background: none;
}
.task.alert {
  border-color: #fbe7a5;
  background: linear-gradient(165deg, #f8e27b 0%, #f2c84f 44%, #dd9238 55%, #e08a35);
}
.task.active {
  margin-left: 3px;
  border-color: #d5d2d8;
  background: linear-gradient(165deg, #c6c3c8 0%, #a29da5 42%, #817a85 46%, #9b95a0);
}
.tray {
  display: flex;
  flex: none;
  align-items: center;
  margin-left: auto;
}
.tray button {
  width: 37px;
}
.tray svg {
  width: 26px;
  height: 26px;
}
.clock {
  display: flex;
  flex-direction: column;
  align-items: center;
  flex: none;
  width: 106px;
  padding-top: 4px;
  line-height: 25px;
}
.peek {
  box-sizing: border-box;
  width: 14px;
  height: 53px;
  border: 1px solid #8a8290;
  background: linear-gradient(#7b7480, #3d3441);
}
.watermark {
  position: absolute;
  right: 49px;
  bottom: 19px;
  display: flex;
  gap: 5px;
  width: 212px;
  color: #fff;
  font-family: Inter, "Open Sans", sans-serif;
  opacity: 0.6;
  pointer-events: none;
}
.watermark > svg {
  width: 36px;
  height: 44px;
}
.watermark strong {
  display: block;
  font-size: 25px;
  font-weight: 600;
  line-height: 23px;
}
.mark-row {
  display: flex;
  align-items: center;
  gap: 5px;
}
.watermark small {
  font-size: 12px;
  font-weight: 500;
  line-height: 11px;
  white-space: nowrap;
}
</style>
